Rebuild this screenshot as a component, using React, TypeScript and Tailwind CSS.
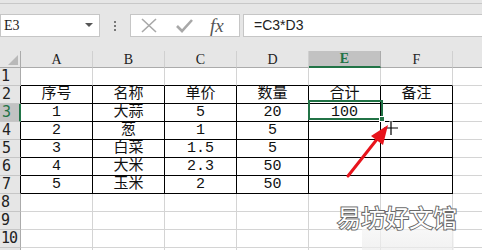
import React from 'react';

const cols = ['A', 'B', 'C', 'D', 'E', 'F'];

const data: string[][] = [
  ['', '', '', '', '', ''],
  ['序号', '名称', '单价', '数量', '合计', '备注'],
  ['1', '大蒜', '5', '20', '100', ''],
  ['2', '葱', '1', '5', '', ''],
  ['3', '白菜', '1.5', '5', '', ''],
  ['4', '大米', '2.3', '50', '', ''],
  ['5', '玉米', '2', '50', '', ''],
  ['', '', '', '', '', ''],
  ['', '', '', '', '', ''],
  ['', '', '', '', '', ''],
  ['', '', '', '', '', ''],
];

const cellFont = { fontFamily: '"Liberation Mono", "Noto Sans CJK SC", monospace' };

function Toolbar() {
  return (
    <div className="h-[48px] bg-[#e6e6e6] border-t border-[#c8c8c8] flex items-start pt-[10px]">
      {/* name box */}
      <div className="w-[100px] h-[23px] bg-white border border-[#c6c6c6] flex items-center justify-between pl-[3px] pr-[6px]">
        <span className="text-[14px] text-[#222]" style={{ fontFamily: '"Liberation Serif", serif' }}>E3</span>
        <svg width="8" height="5" viewBox="0 0 8 5"><path d="M0 0 L8 0 L4 4 Z" fill="#555" /></svg>
      </div>
      <div className="w-[30px] h-[23px] flex flex-col items-center justify-center gap-[2px]">
        <span className="w-[2px] h-[2px] bg-[#777]" />
        <span className="w-[2px] h-[2px] bg-[#777]" />
        <span className="w-[2px] h-[2px] bg-[#777]" />
      </div>
      {/* buttons */}
      <div className="w-[110px] h-[23px] bg-white border border-[#c6c6c6] flex items-center">
        <svg className="ml-[10px]" width="16" height="15" viewBox="0 0 16 15">
          <path d="M1 1 L15 14 M15 1 L1 14" stroke="#a8a8a8" strokeWidth="1.6" fill="none" />
        </svg>
        <svg className="ml-[19px]" width="17" height="14" viewBox="0 0 17 14">
          <path d="M1 7 L6 12 L16 1" stroke="#a8a8a8" strokeWidth="2.6" fill="none" />
        </svg>
        <span className="ml-[17px] text-[19px] italic text-[#555] leading-none" style={{ fontFamily: '"Liberation Serif", serif' }}>fx</span>
      </div>
      <div className="ml-[3px] flex-1 h-[23px] bg-white border border-[#c6c6c6] border-r-0 flex items-center pl-[10px]">
        <span className="text-[14px] text-[#222]" style={{ fontFamily: '"Liberation Sans", sans-serif' }}>=C3*D3</span>
      </div>
    </div>
  );
}

function HeaderRow() {
  return (
    <div className="flex h-[17px]">
      <div className="w-[21px] shrink-0 h-full bg-[#e6e6e6] border-r border-b border-[#ababab] relative">
        <svg className="absolute right-[2px] bottom-[2px]" width="10" height="10" viewBox="0 0 10 10">
          <path d="M10 0 L10 10 L0 10 Z" fill="#b9b9b9" />
        </svg>
      </div>
      {cols.map((c) =>
        c === 'E' ? (
          <div key={c} className="w-[72px] shrink-0 h-full bg-[#c2c2c2] border-r border-[#ababab] border-b-2 border-b-[#217346] flex items-center justify-center text-[14px] font-bold text-[#217346]" style={{ fontFamily: '"Liberation Serif", serif' }}>
            {c}
          </div>
        ) : (
          <div key={c} className="w-[72px] shrink-0 h-full bg-[#e6e6e6] border-r border-b border-[#ababab] border-r-[#d0d0d0] flex items-center justify-center text-[14px] text-[#222]" style={{ fontFamily: '"Liberation Serif", serif' }}>
            {c}
          </div>
        )
      )}
      <div className="flex-1 h-full bg-[#e6e6e6] border-b border-[#ababab]" />
    </div>
  );
}

function Row({ r, cells }: { r: number; cells: string[] }) {
  const inTable = r >= 2 && r <= 7;
  const sel = r === 3;
  const label = r <= 10 ? String(r) : '';
  return (
    <div className="flex h-[18px]">
      <div
        className={
          sel
            ? 'w-[21px] shrink-0 h-full bg-[#c2c2c2] border-r-2 border-r-[#217346] border-b border-b-[#c6c6c6] flex items-center text-[15px] text-[#217346] leading-none pl-[2px]'
            : inTable
            ? 'w-[21px] shrink-0 h-full bg-[#e6e6e6] border-r border-r-black border-b border-b-[#c6c6c6] flex items-center text-[15px] text-[#222] leading-none pl-[2px]'
            : 'w-[21px] shrink-0 h-full bg-[#e6e6e6] border-r border-r-[#ababab] border-b border-b-[#c6c6c6] flex items-center text-[15px] text-[#222] leading-none pl-[1px] tracking-[-1px]'
        }
        style={{ fontFamily: '"DejaVu Sans Mono", monospace' }}
      >
        {label}
      </div>
      {cells.map((v, i) => {
        let cls = 'w-[72px] shrink-0 h-full border-r border-b flex items-center justify-center text-[15px] text-[#111] leading-none ';
        if (inTable) cls += 'border-black';
        else if (r === 1) cls += 'border-r-[#d4d4d4] border-b-black';
        else cls += 'border-[#d4d4d4]';
        return (
          <div key={i} className={cls} style={cellFont}>
            {v}
          </div>
        );
      })}
      <div className="flex-1 h-full border-b border-[#d4d4d4]" />
    </div>
  );
}

export default function App() {
  return (
    <div className="w-[482px] h-[250px] overflow-hidden bg-white relative">
      <div className="h-[3px] bg-[#e6e6e6]" />
      <Toolbar />
      <HeaderRow />
      {data.map((cells, i) => (
        <Row key={i} r={i + 1} cells={cells} />
      ))}

      {/* active cell selection */}
      <div className="absolute left-[308px] top-[100px] w-[75px] h-[20px] border-2 border-[#217346]" />
      <div className="absolute left-[379px] top-[116px] w-[6px] h-[6px] bg-[#217346] border border-white" />

      {/* cursor + arrow */}
      <svg className="absolute left-0 top-0" width="482" height="250" viewBox="0 0 482 250">
        <path d="M391 121 L391 135 M384 128 L398 128" stroke="#fff" strokeWidth="3" />
        <path d="M391 121 L391 135 M384 128 L398 128" stroke="#000" strokeWidth="1.2" />
        <path d="M348 176 L378 138" stroke="#e8141c" strokeWidth="3" strokeLinecap="round" />
        <path d="M388 125 L371 136 L383 145 Z" fill="#e8141c" />
      </svg>

      {/* watermark */}
      <div className="absolute left-[362px] top-[229px] w-[92px] h-[21px] bg-gradient-to-b from-[#f4f4f4] to-[#ececec] opacity-70" />
      <div
        className="absolute left-[337px] top-[205px] text-[24px] leading-none text-white [-webkit-text-stroke:2px_#6a6a6a] [paint-order:stroke_fill]"
        style={{ fontFamily: '"Noto Sans CJK SC", sans-serif' }}
      >
        易坊好文馆
      </div>
    </div>
  );
}
